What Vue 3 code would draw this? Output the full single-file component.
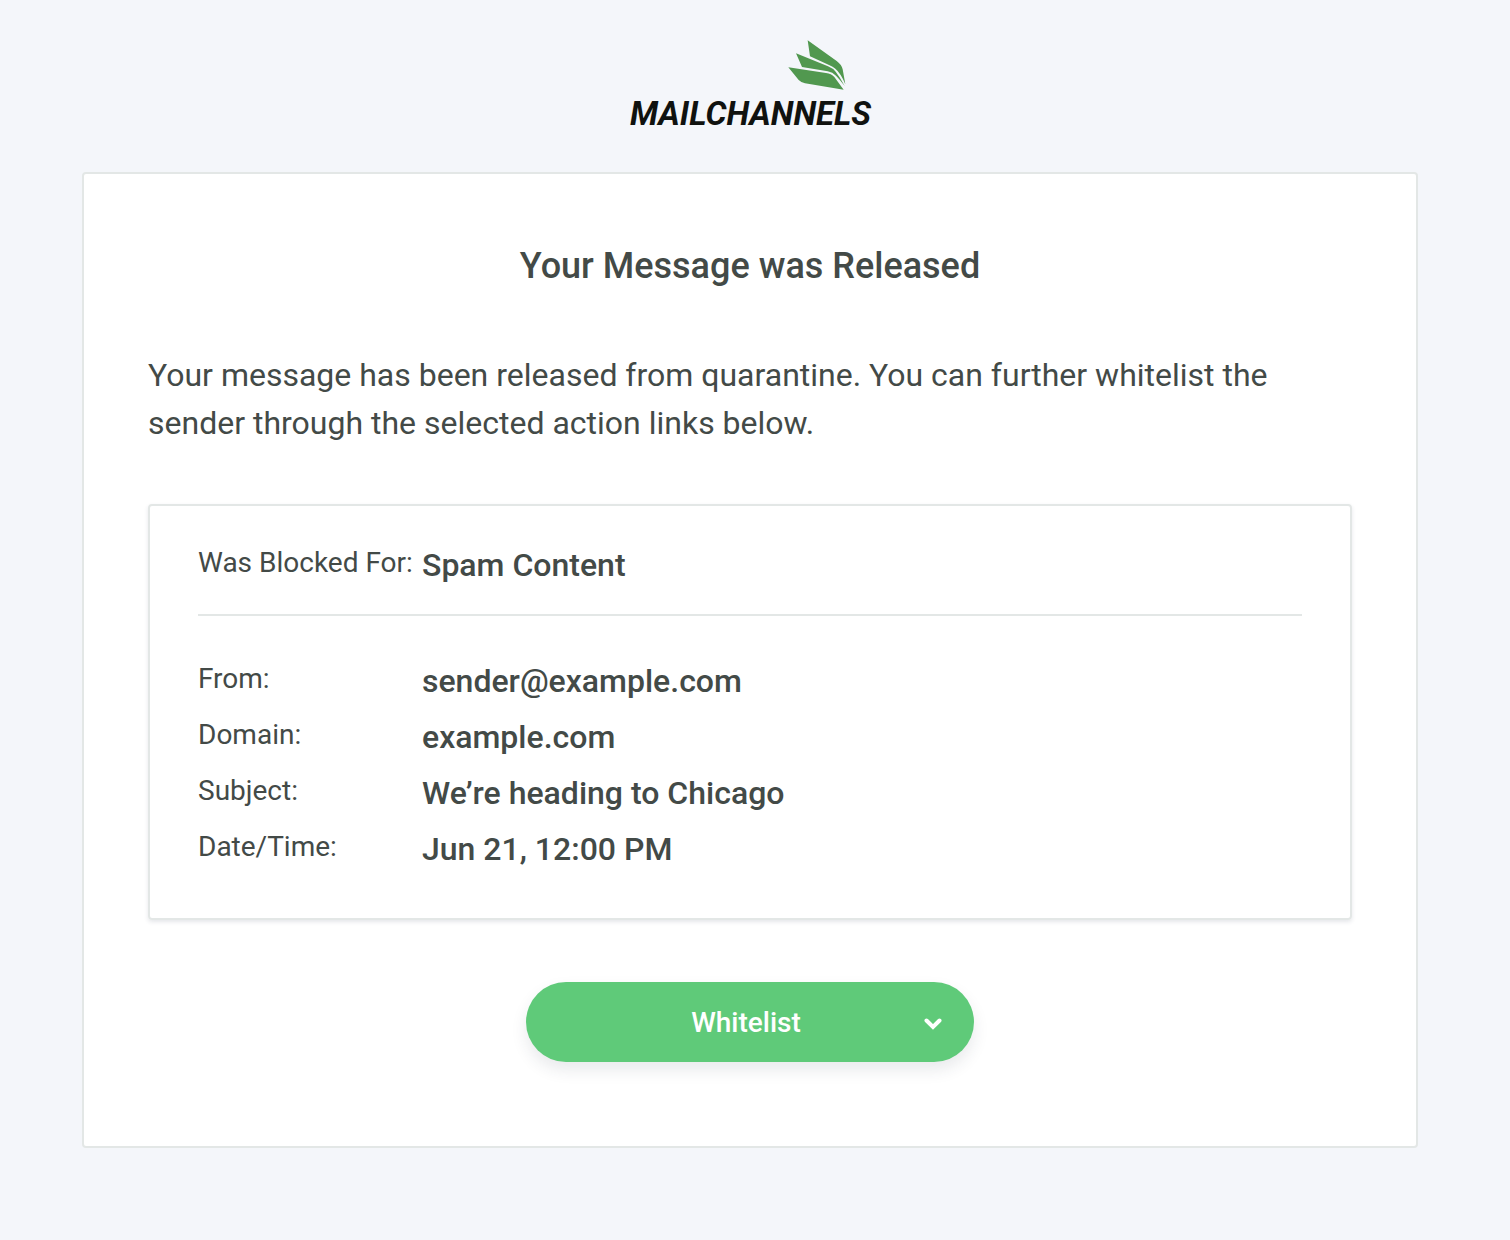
<script setup>
const details = [
  { label: 'From:', value: 'sender@example.com' },
  { label: 'Domain:', value: 'example.com' },
  { label: 'Subject:', value: 'We’re heading to Chicago' },
  { label: 'Date/Time:', value: 'Jun 21, 12:00 PM' },
]
</script>

<template>
  <div class="page">
    <header class="brand">
      <svg class="wing" viewBox="505 30 174 150" aria-hidden="true">
        <path d="M564 31 L651 93 Q666 104 669 118 L677 163 Q664 130 647 116 Q640 110 628 105 L571 79 Z" />
        <path d="M529 70 L625 109 Q640 115 648 125 Q662 143 675 168 Q661 149 649 137 Q639 127 624 124 L547 111 Z" />
        <path d="M506 112 L619 129 Q635 131 644 141 L672 179 L556 160 Q545 158 537 150 Z" />
      </svg>
      <span class="wordmark">MAILCHANNELS</span>
    </header>

    <main class="card">
      <h1>Your Message was Released</h1>
      <p class="intro">
        Your message has been released from quarantine. You can further whitelist the sender through
        the selected action links below.
      </p>

      <section class="message">
        <dl class="reason">
          <div class="row">
            <dt>Was Blocked For:</dt>
            <dd>Spam Content</dd>
          </div>
        </dl>
        <dl>
          <div v-for="item in details" :key="item.label" class="row">
            <dt>{{ item.label }}</dt>
            <dd>{{ item.value }}</dd>
          </div>
        </dl>
      </section>

      <button type="button" class="action" aria-haspopup="menu">
        <span class="action-label">Whitelist</span>
        <svg class="chevron" viewBox="0 0 18 12" aria-hidden="true">
          <path d="M2.5 2.5 L9 9 L15.5 2.5" />
        </svg>
      </button>
    </main>
  </div>
</template>

<style>
body {
  margin: 0;
  background: #f4f6fa;
}
</style>

<style scoped>
.page {
  box-sizing: border-box;
  min-height: 100vh;
  padding: 40px 92px 92px 82px;
  background: #f4f6fa;
  color: #434a47;
  font-family: Roboto, sans-serif;
}

.brand {
  display: flex;
  flex-direction: column;
  width: 240px;
  height: 132px;
  margin: 0 auto;
}

.wing {
  width: 58px;
  height: 50px;
  margin-left: 158px;
  fill: #51984f;
}

.wordmark {
  color: #10120f;
  font: italic 700 33px/48px Roboto, sans-serif;
  white-space: nowrap;
}

.card {
  display: flex;
  flex-direction: column;
  padding: 68px 64px 84px;
  border: 2px solid #e3e7e6;
  border-radius: 4px;
  background: #fff;
}

h1 {
  margin: 0 0 61px;
  font-size: 36px;
  font-weight: 500;
  line-height: 48px;
  text-align: center;
}

.intro {
  margin: 0 0 57px;
  font-size: 32px;
  line-height: 48px;
}

.message {
  padding: 31px 48px 41px;
  border: 2px solid #e3e7e6;
  border-radius: 4px;
  box-shadow: 0 2px 4px rgba(40, 50, 80, 0.12);
}

dl,
dd {
  margin: 0;
}

.reason {
  margin-bottom: 37px;
  padding-bottom: 21px;
  border-bottom: 2px solid #e3e7e6;
}

.row {
  display: flex;
}

dt {
  flex: 0 0 224px;
  font-size: 28px;
  line-height: 51px;
}

dd {
  font-size: 32px;
  font-weight: 500;
  line-height: 56px;
}

.action {
  display: flex;
  align-items: center;
  align-self: center;
  width: 448px;
  height: 80px;
  margin-top: 62px;
  padding: 2px 32px 0 42px;
  border: 0;
  border-radius: 40px;
  background: #5fca79;
  box-shadow: 0 8px 16px rgba(40, 45, 70, 0.1);
  color: #fff;
  font: 500 28px/40px Roboto, sans-serif;
  cursor: pointer;
}

.action-label {
  flex: 1;
  text-align: center;
}

.chevron {
  width: 18px;
  height: 12px;
  margin-top: 2px;
  fill: none;
  stroke: #fff;
  stroke-width: 4;
  stroke-linecap: round;
}
</style>
